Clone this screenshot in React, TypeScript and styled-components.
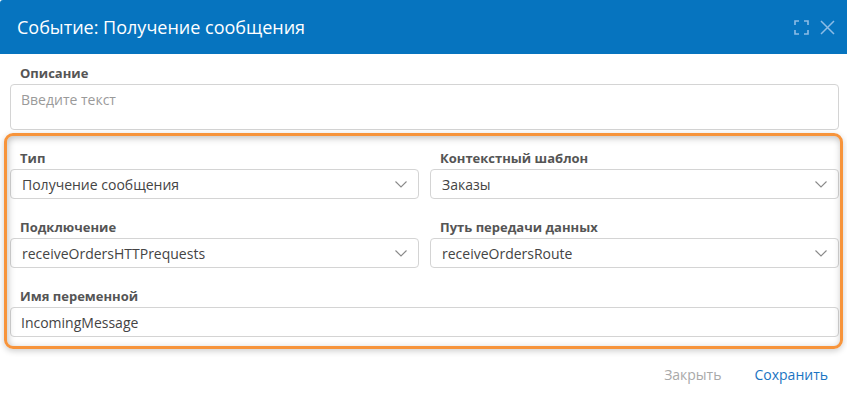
import React from 'react';
import styled, { createGlobalStyle } from 'styled-components';

const GlobalStyle = createGlobalStyle`
  html, body {
    margin: 0;
    padding: 0;
    background: #ffffff;
  }
  * {
    box-sizing: border-box;
  }
`;

const Dialog = styled.div`
  width: 847px;
  height: 394px;
  display: flex;
  flex-direction: column;
  background: #fff;
  font-family: "Open Sans", "Noto Sans", sans-serif;
  color: #444;
`;

const Header = styled.div`
  height: 54px;
  flex: 0 0 54px;
  background: #0674bf;
  border-top-left-radius: 3px;
  display: flex;
  align-items: center;
  justify-content: space-between;
  padding: 0 12px 0 17px;
`;

const Title = styled.h1`
  margin: 0;
  font-size: 18px;
  font-weight: 400;
  color: #fff;
`;

const HeaderTools = styled.div`
  display: flex;
  align-items: center;
  gap: 10px;
`;

const ToolButton = styled.button`
  border: 0;
  padding: 0;
  background: transparent;
  width: 16px;
  height: 16px;
  display: flex;
  align-items: center;
  justify-content: center;
  cursor: pointer;
  color: #8cbce6;
`;

const Body = styled.div`
  flex: 1;
  padding: 10px 8px 0 10px;
  display: flex;
  flex-direction: column;
  gap: 19px;
`;

const Field = styled.div`
  display: flex;
  flex-direction: column;
  gap: 2px;
  min-width: 0;
`;

const Label = styled.label`
  font-size: 13px;
  line-height: 18px;
  font-weight: 700;
  color: #555;
  padding-left: 10px;
`;

const TextArea = styled.textarea`
  height: 46px;
  resize: none;
  border: 1px solid #d4d4d4;
  border-radius: 4px;
  padding: 5px 10px;
  font-family: inherit;
  font-size: 14px;
  line-height: 20px;
  color: #444;
  outline: none;
  &::placeholder {
    color: #9a9a9a;
  }
`;

const Highlighted = styled.div`
  position: relative;
  display: flex;
  flex-direction: column;
  gap: 19px;
  &::before {
    content: "";
    position: absolute;
    top: -16px;
    bottom: -12px;
    left: -6px;
    right: -4px;
    border: 3px solid #f7943b;
    border-radius: 9px;
    box-shadow: inset 1px 2px 7px rgba(0, 0, 0, 0.25), 0 2px 6px rgba(0, 0, 0, 0.2);
    pointer-events: none;
  }
`;

const Row = styled.div`
  display: grid;
  grid-template-columns: 1fr 1fr;
  column-gap: 11px;
`;

const SelectBox = styled.div`
  height: 30px;
  border: 1px solid #d4d4d4;
  border-radius: 4px;
  display: flex;
  align-items: center;
  justify-content: space-between;
  padding: 0 11px 0 11px;
  font-size: 14px;
  color: #444;
  background: #fff;
`;

const Input = styled.input`
  height: 30px;
  border: 1px solid #d4d4d4;
  border-radius: 4px;
  padding: 0 10px;
  font-family: inherit;
  font-size: 14px;
  color: #444;
  outline: none;
`;

const Footer = styled.div`
  flex: 0 0 40px;
  display: flex;
  align-items: center;
  justify-content: flex-end;
  gap: 33px;
  padding: 0 19px 0 0;
`;

const FooterButton = styled.button<{ $primary?: boolean }>`
  border: 0;
  background: transparent;
  padding: 0;
  font-family: inherit;
  font-size: 14px;
  color: ${(p) => (p.$primary ? '#1a74c2' : '#a9a9a9')};
  cursor: pointer;
`;

const Chevron = () => (
  <svg width="12" height="7" viewBox="0 0 12 7" fill="none">
    <path d="M0.5 0.5L6 6L11.5 0.5" stroke="#8a8a8a" strokeWidth="1.1" />
  </svg>
);

const Select = ({ value }: { value: string }) => (
  <SelectBox>
    <span>{value}</span>
    <Chevron />
  </SelectBox>
);

const App = () => {
  return (
    <>
      <GlobalStyle />
      <Dialog>
        <Header>
          <Title>Событие: Получение сообщения</Title>
          <HeaderTools>
            <ToolButton aria-label="Развернуть">
              <svg width="15" height="15" viewBox="0 0 15 15" fill="none" stroke="currentColor" strokeWidth="1.6">
                <path d="M1 5V1H5M10 1H14V5M14 10V14H10M5 14H1V10" />
              </svg>
            </ToolButton>
            <ToolButton aria-label="Закрыть">
              <svg width="15" height="15" viewBox="0 0 15 15" fill="none" stroke="currentColor" strokeWidth="1.5">
                <path d="M1 1L14 14M14 1L1 14" />
              </svg>
            </ToolButton>
          </HeaderTools>
        </Header>
        <Body>
          <Field>
            <Label>Описание</Label>
            <TextArea placeholder="Введите текст" />
          </Field>
          <Highlighted>
            <Row>
              <Field>
                <Label>Тип</Label>
                <Select value="Получение сообщения" />
              </Field>
              <Field>
                <Label>Контекстный шаблон</Label>
                <Select value="Заказы" />
              </Field>
            </Row>
            <Row>
              <Field>
                <Label>Подключение</Label>
                <Select value="receiveOrdersHTTPrequests" />
              </Field>
              <Field>
                <Label>Путь передачи данных</Label>
                <Select value="receiveOrdersRoute" />
              </Field>
            </Row>
            <Field>
              <Label>Имя переменной</Label>
              <Input defaultValue="IncomingMessage" />
            </Field>
          </Highlighted>
        </Body>
        <Footer>
          <FooterButton>Закрыть</FooterButton>
          <FooterButton $primary>Сохранить</FooterButton>
        </Footer>
      </Dialog>
    </>
  );
};

export default App;
